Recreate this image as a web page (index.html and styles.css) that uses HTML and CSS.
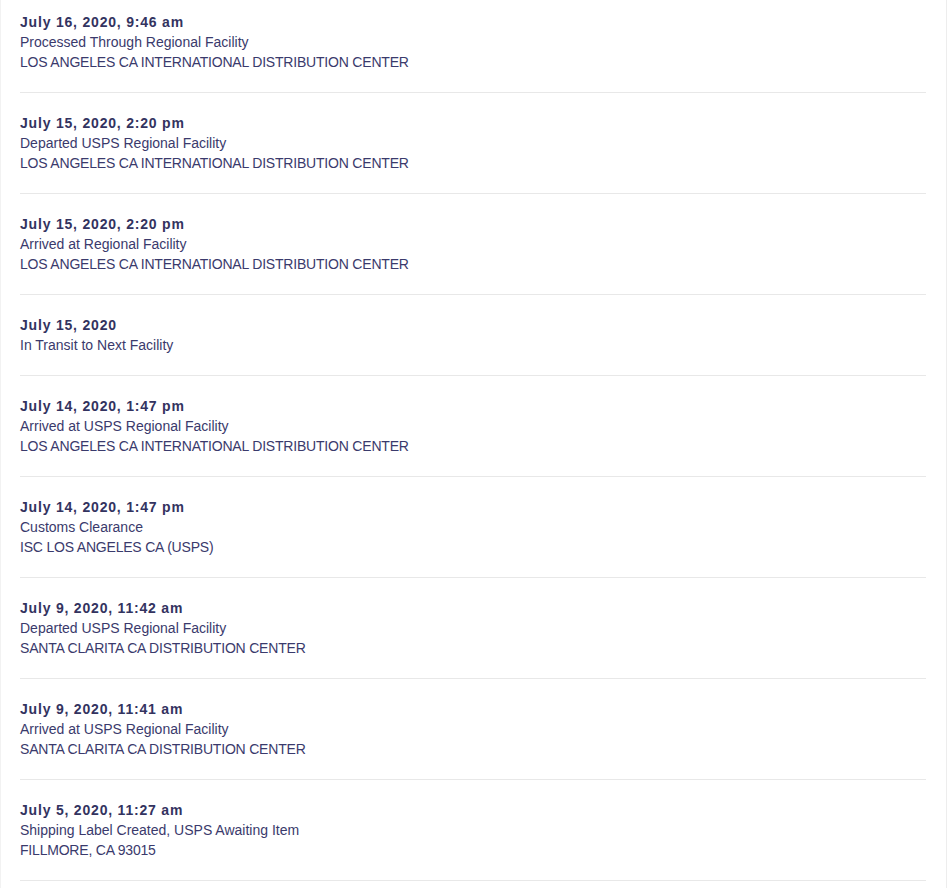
FILE: index.html
```html
<!DOCTYPE html>
<html>
<head>
<meta charset="utf-8">
<link rel="stylesheet" href="styles.css">
</head>
<body>
<div class="panel">
  <ul class="events">
    <li class="event first">
      <div class="date">July 16, 2020, 9:46 am</div>
      <div class="status">Processed Through Regional Facility</div>
      <div class="loc">LOS ANGELES CA INTERNATIONAL DISTRIBUTION CENTER</div>
    </li>
    <li class="event">
      <div class="date">July 15, 2020, 2:20 pm</div>
      <div class="status">Departed USPS Regional Facility</div>
      <div class="loc">LOS ANGELES CA INTERNATIONAL DISTRIBUTION CENTER</div>
    </li>
    <li class="event">
      <div class="date">July 15, 2020, 2:20 pm</div>
      <div class="status">Arrived at Regional Facility</div>
      <div class="loc">LOS ANGELES CA INTERNATIONAL DISTRIBUTION CENTER</div>
    </li>
    <li class="event">
      <div class="date">July 15, 2020</div>
      <div class="status">In Transit to Next Facility</div>
    </li>
    <li class="event">
      <div class="date">July 14, 2020, 1:47 pm</div>
      <div class="status">Arrived at USPS Regional Facility</div>
      <div class="loc">LOS ANGELES CA INTERNATIONAL DISTRIBUTION CENTER</div>
    </li>
    <li class="event">
      <div class="date">July 14, 2020, 1:47 pm</div>
      <div class="status">Customs Clearance</div>
      <div class="loc">ISC LOS ANGELES CA (USPS)</div>
    </li>
    <li class="event">
      <div class="date">July 9, 2020, 11:42 am</div>
      <div class="status">Departed USPS Regional Facility</div>
      <div class="loc">SANTA CLARITA CA DISTRIBUTION CENTER</div>
    </li>
    <li class="event">
      <div class="date">July 9, 2020, 11:41 am</div>
      <div class="status">Arrived at USPS Regional Facility</div>
      <div class="loc">SANTA CLARITA CA DISTRIBUTION CENTER</div>
    </li>
    <li class="event">
      <div class="date">July 5, 2020, 11:27 am</div>
      <div class="status">Shipping Label Created, USPS Awaiting Item</div>
      <div class="loc">FILLMORE, CA 93015</div>
    </li>
  </ul>
</div>
</body>
</html>
```
FILE: styles.css
```css
html, body {
  margin: 0;
  padding: 0;
  background: #ffffff;
}
body {
  font-family: "Liberation Sans", Arial, Helvetica, sans-serif;
  font-size: 14px;
  color: #333366;
  overflow: hidden;
}
.panel {
  width: 947px;
  height: 888px;
  box-sizing: border-box;
  border-left: 1px solid #f2f2f2;
  border-right: 1px solid #ededed;
  padding: 0 20px 0 19px;
}
.events {
  list-style: none;
  margin: 0;
  padding: 0;
}
.event {
  padding: 20px 0;
  border-bottom: 1px solid #e8e8e8;
  line-height: 20px;
}
.event.first {
  padding-top: 12px;
}
.date {
  font-weight: bold;
  letter-spacing: 0.8px;
  color: #33335f;
}
.status {
  color: #3a3a6c;
}
.loc {
  color: #3a3a6c;
  letter-spacing: -0.2px;
}
```
